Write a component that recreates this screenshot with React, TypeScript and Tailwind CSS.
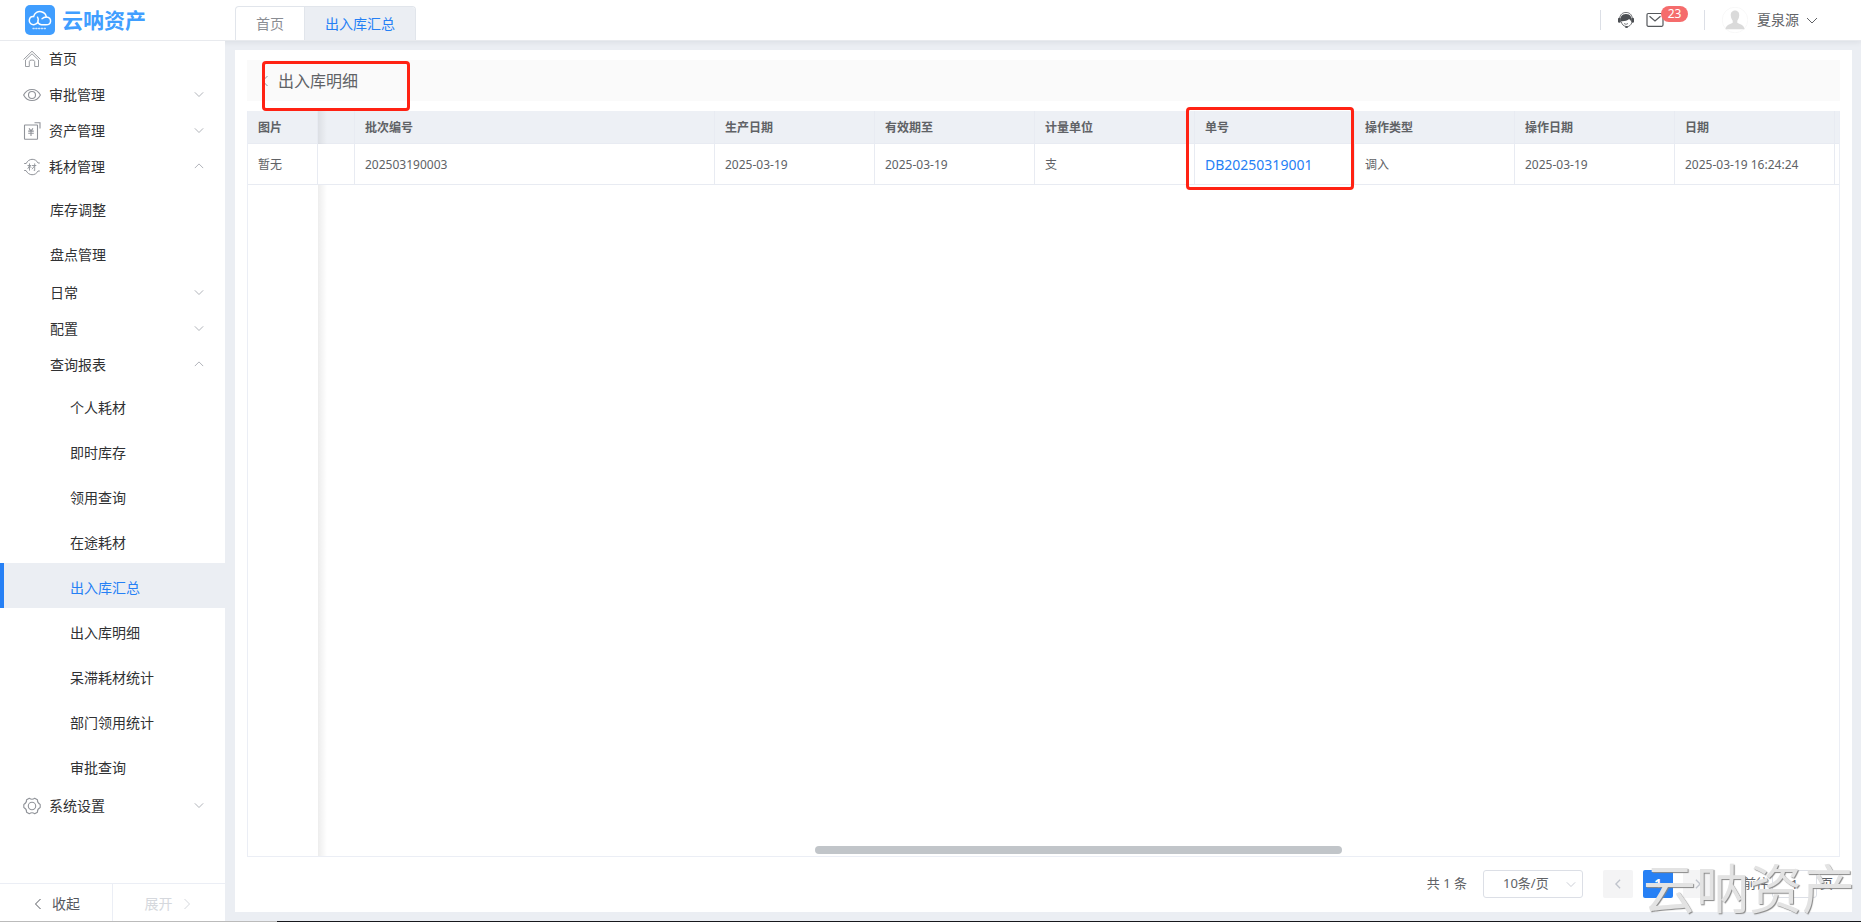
import type { ReactNode } from 'react';

type MenuEntry = {
  label: string;
  level: 1 | 2 | 3;
  icon?: ReactNode;
  open?: boolean;
  group?: boolean;
  active?: boolean;
};

function Chevron({ dir, className }: { dir: 'up' | 'down' | 'left' | 'right'; className: string }) {
  const paths = {
    down: 'M1 4 L6 9 L11 4',
    up: 'M1 8.500 L6 3.500 L11 8.500',
    left: 'M8.500 1 L3.500 6 L8.500 11',
    right: 'M3.500 1 L8.500 6 L3.500 11',
  };
  return (
    <svg viewBox="0 0 12 12" className={className} fill="none" stroke="currentColor" strokeWidth="1" aria-hidden="true">
      <path d={paths[dir]} />
    </svg>
  );
}

const iconClass = 'h-[18px] w-[18px] shrink-0 text-[#909399]';

const HomeIcon = (
  <svg viewBox="0 0 18 18" className={iconClass} fill="none" stroke="currentColor" aria-hidden="true">
    <path d="M.5 9.500 L9 1.200 L17.500 9.500" strokeWidth=".9" />
    <path d="M2.500 10 L9 3.800 L15.500 10 V16.500 H11.700 V11.500 Q11.700 10 9 10 Q6.300 10 6.300 11.500 V16.500 H2.500 Z" strokeWidth=".9" />
  </svg>
);
const EyeIcon = (
  <svg viewBox="0 0 18 18" className={iconClass} fill="none" stroke="currentColor" strokeWidth="1.1" aria-hidden="true">
    <path d="M.6 9 C4.500 1.600 13.500 1.600 17.400 9 C13.500 16.400 4.500 16.400 .6 9 Z" />
    <circle cx="9" cy="9" r="3.500" />
  </svg>
);
const AssetIcon = (
  <svg viewBox="0 0 18 18" className={iconClass} fill="none" stroke="currentColor" strokeWidth="1.1" aria-hidden="true">
    <rect x="1.500" y="3" width="13" height="14.200" rx=".5" />
    <path d="M11.500 .8 H17 V6.500" />
    <path d="M6 6.300 L8 8.800 L10 6.300 M5.200 9.100 H10.800 M5.200 11.200 H10.800 M8 8.800 V14" />
  </svg>
);
const MaterialIcon = (
  <svg viewBox="0 0 18 18" className={iconClass} fill="none" stroke="currentColor" strokeWidth="1" aria-hidden="true">
    <path d="M1.200 5.500 H3.200 C5.500 .2 12.500 -.2 15 5 H16.800 M1.200 12.500 H3 C5.500 17.900 12.500 18.200 15 13 H16.800" />
    <path d="M4.500 7.500 H8.300 M6.500 5.400 V12.600 M6.400 8 L4.700 10.800 M6.700 8 L8.200 9.800 M9 7.500 H13.300 M11.700 5.400 V12.600 L10.700 12.300 M11.500 8 L9 11.200" strokeWidth=".9" />
  </svg>
);
const GearIcon = (
  <svg viewBox="0 0 18 18" className={iconClass} fill="none" stroke="currentColor" strokeWidth="1.1" strokeLinejoin="round" aria-hidden="true">
    <path d="M6.300 1.200 Q9 3.200 11.700 1.200 L14.400 2.800 Q14.200 6 17.200 7.400 V10.600 Q14.200 12 14.400 15.200 L11.700 16.800 Q9 14.800 6.300 16.800 L3.600 15.200 Q3.800 12 .8 10.600 V7.400 Q3.800 6 3.600 2.800 Z" />
    <circle cx="9" cy="9" r="3.700" />
  </svg>
);

const menu: MenuEntry[] = [
  { label: '首页', level: 1, icon: HomeIcon },
  { label: '审批管理', level: 1, icon: EyeIcon, group: true },
  { label: '资产管理', level: 1, icon: AssetIcon, group: true },
  { label: '耗材管理', level: 1, icon: MaterialIcon, group: true, open: true },
  { label: '库存调整', level: 2 },
  { label: '盘点管理', level: 2 },
  { label: '日常', level: 2, group: true },
  { label: '配置', level: 2, group: true },
  { label: '查询报表', level: 2, group: true, open: true },
  { label: '个人耗材', level: 3 },
  { label: '即时库存', level: 3 },
  { label: '领用查询', level: 3 },
  { label: '在途耗材', level: 3 },
  { label: '出入库汇总', level: 3, active: true },
  { label: '出入库明细', level: 3 },
  { label: '呆滞耗材统计', level: 3 },
  { label: '部门领用统计', level: 3 },
  { label: '审批查询', level: 3 },
  { label: '系统设置', level: 1, icon: GearIcon, group: true },
];

function MenuItem({ entry }: { entry: MenuEntry }) {
  if (entry.level === 1 || entry.group) {
    return (
      <button
        type="button"
        aria-expanded={entry.group ? !!entry.open : undefined}
        className={`flex h-9 w-full items-center pr-[21px] text-left text-[#303133] ${entry.level === 1 ? 'gap-2 pl-[23px]' : 'pl-[50px]'}`}
      >
        {entry.icon}
        <span className="grow">{entry.label}</span>
        {entry.group && <Chevron dir={entry.open ? 'up' : 'down'} className="mb-[2px] h-[10px] w-[10px] text-[#a0a4ab]" />}
      </button>
    );
  }
  return (
    <a
      href="#"
      className={`flex h-[45px] items-center border-l-4 pt-1 ${entry.level === 2 ? 'pl-[46px]' : 'pl-[66px]'} ${
        entry.active ? 'border-[#2680f5] bg-[#ebeef3] text-[#2680f5]' : 'border-transparent text-[#303133]'
      }`}
    >
      {entry.label}
    </a>
  );
}

function Header() {
  return (
    <header className="relative z-10 flex h-[41px] shrink-0 border-b border-[#e8eaee] bg-white shadow-[0_1px_6px_rgba(0,21,41,0.08)]">
      <div className="flex w-[235px] shrink-0 items-center gap-[7px] pl-[25px]">
        <svg viewBox="0 0 30 30" className="h-[30px] w-[30px]" fill="none" stroke="#fff" strokeLinecap="round" aria-hidden="true">
          <rect width="30" height="30" rx="5" fill="#409eff" stroke="none" />
          <path
            d="M12.500 12.200 C14 14.500 13.500 18.800 9.500 19.600 C6 20 4 17.800 4.300 15.200 C4.600 12.800 6.500 11.400 8.600 11.600 C9.500 7.800 13 6 16.300 6.800 C19.300 7.500 21 9.600 21.300 12 C24 12.300 25.700 13.800 25.600 16.200 C25.400 18.700 23.600 19.800 21 19.800 H16.500 C13.800 19.500 12.300 17.500 13 15"
            strokeWidth="1.500"
          />
          <path d="M17 13.800 C18.500 12.200 20 12 21.300 12" strokeWidth="1.300" />
          <path d="M8 23.500 H22" strokeWidth="1.300" strokeDasharray="1.200 1.600" opacity=".75" />
        </svg>
        <span className="text-[21px] leading-none font-bold text-[#409eff]">云呐资产</span>
      </div>
      <nav className="mt-[6px] flex grow">
        <div className="flex overflow-hidden rounded-t border border-b-0 border-[#e1e5eb]">
          <a href="#" className="flex w-[68px] items-center justify-center text-[#8a8d93]">首页</a>
          <a href="#" className="flex w-[111px] items-center justify-center border-l border-[#e1e5eb] bg-[#ebeef3] text-[#2680f5]">出入库汇总</a>
        </div>
      </nav>
      <div className="flex items-center pr-[43px] pb-1 text-[#606266]">
        <span className="mt-1 h-5 w-px bg-[#dcdfe6]" />
        <button type="button" aria-label="客服" className="mt-1 ml-[17px]">
          <svg viewBox="0 0 16 16" className="h-4 w-4" aria-hidden="true">
            <path d="M1.800 6.500 C1.800 -1.600 14.200 -1.600 14.200 6.500" fill="none" stroke="#4c4f53" strokeWidth=".8" />
            <path d="M2.600 9.200 C2.200 5 3.300 1.900 8 1.900 C12.700 1.900 13.800 5 13.400 9.200 C12.700 8.900 11.800 8.200 11.200 7.100 C9 9.100 5.500 9.500 2.600 9.200 Z" fill="#4c4f53" />
            <rect x="0" y="5.800" width="2.800" height="5" rx="1.300" fill="#4c4f53" />
            <rect x="13.200" y="5.800" width="2.800" height="5" rx="1.300" fill="#4c4f53" />
            <path d="M3.200 9.500 C4 12.800 5.800 14.200 7.800 14.300 M14 10.300 C13.200 13 11 14.800 8.300 15" fill="none" stroke="#4c4f53" strokeWidth=".8" />
            <path d="M6 11.500 Q8 13.200 10 11.500" fill="none" stroke="#4c4f53" strokeWidth=".7" />
            <ellipse cx="8.500" cy="14.900" rx="1.500" ry="1" fill="#4c4f53" />
          </svg>
        </button>
        <button type="button" aria-label="消息 23" className="relative mt-1 ml-3">
          <svg viewBox="0 0 18 16" className="h-4 w-[18px]" fill="none" stroke="#55585c" strokeWidth="1.200" aria-hidden="true">
            <rect x="1" y="1.500" width="16" height="12.800" rx="1.200" />
            <path d="M3.500 4.200 L9 9 L14.500 4.200" />
          </svg>
          <span className="absolute -top-[6px] left-[15px] flex h-4 w-[27px] items-center justify-center rounded-full bg-[#f56c6c] text-xs leading-none text-white">23</span>
        </button>
        <span className="mt-1 ml-10 h-5 w-px bg-[#dcdfe6]" />
        <button type="button" className="mt-1 ml-[17px] flex items-center">
          <svg viewBox="0 0 26 26" className="h-[26px] w-[26px]" aria-hidden="true">
            <circle cx="13" cy="13" r="12.800" fill="#fff" stroke="#f3f3f3" strokeWidth=".6" />
            <path d="M13 3.500 C16 3.500 17.500 5.800 17.200 8.800 C17 11.500 16 12.600 15.300 13.800 V15.800 C17.500 17.300 22 17.600 22.600 22.300 H3.400 C4 17.600 8.500 17.300 10.700 15.800 V13.800 C10 12.600 9 11.500 8.800 8.800 C8.500 5.800 10 3.500 13 3.500 Z" fill="#dadada" />
          </svg>
          <span className="ml-[9px]">夏泉源</span>
          <Chevron dir="down" className="ml-[7px] h-3 w-3" />
        </button>
      </div>
    </header>
  );
}

const columns = ['图片', '', '批次编号', '生产日期', '有效期至', '计量单位', '单号', '操作类型', '操作日期', '日期', ''];
const row = ['暂无', '', '202503190003', '2025-03-19', '2025-03-19', '支', 'DB20250319001', '调入', '2025-03-19', '2025-03-19 16:24:24', ''];

function DataTable() {
  return (
    <div className="relative mt-[10px] grow border border-t-0 border-[#ebeef5]">
      <table className="w-full table-fixed border-separate border-spacing-0 text-left text-xs text-[#606266]">
        <colgroup>
          <col className="w-[70px]" />
          <col className="w-[37px]" />
          <col className="w-[360px]" />
          <col className="w-[160px]" />
          <col className="w-[160px]" />
          <col className="w-[160px]" />
          <col className="w-[160px]" />
          <col className="w-[160px]" />
          <col className="w-[160px]" />
          <col className="w-[160px]" />
          <col />
        </colgroup>
        <thead>
          <tr className="h-[33px] bg-[#edf0f5]">
            {columns.map((name, i) => (
              <th
                key={i}
                scope="col"
                className={`truncate border-b border-[#e8ebf2] px-0 pt-[2px] pb-0 font-bold ${i < 10 ? 'border-r' : ''} ${name ? 'pl-[10px]' : ''}`}
              >
                {name}
              </th>
            ))}
          </tr>
        </thead>
        <tbody>
          <tr className="h-[41px]">
            {row.map((value, i) => (
              <td
                key={i}
                className={`relative z-10 truncate border-b border-[#e8ebf2] bg-white px-0 pt-[2px] pb-0 ${i < 10 ? 'border-r' : ''} ${value ? 'pl-[10px]' : ''}`}
              >
                {i === 6 ? (
                  <a href="#" className="text-sm text-[#2680f5]">{value}</a>
                ) : (
                  value
                )}
              </td>
            ))}
          </tr>
        </tbody>
      </table>
      <div className="pointer-events-none absolute inset-y-0 left-[70px] w-[9px] bg-linear-to-r from-black/7 to-transparent" />
      <div className="pointer-events-none absolute -top-[4px] left-[938px] z-20 h-[83px] w-[168px] rounded border-3 border-[#ff2213]" />
      <div className="absolute bottom-[2px] left-[35.65%] h-2 w-[33.1%] rounded bg-[#c1c5c9]" />
    </div>
  );
}

function Pagination() {
  return (
    <div className="relative flex h-[55px] shrink-0 items-center justify-end pr-[7px] pb-[2px] text-[13px] text-[#606266]">
      <span>共 1 条</span>
      <span className="relative ml-4">
        <select aria-label="每页条数" className="block h-7 w-[100px] appearance-none rounded-[3px] border border-[#dcdfe6] bg-white pl-[19px] text-[13px]">
          <option>10条/页</option>
        </select>
        <Chevron dir="down" className="pointer-events-none absolute top-[9px] right-[7px] h-[10px] w-[10px] text-[#c0c4cc]" />
      </span>
      <button type="button" aria-label="上一页" className="ml-5 flex h-7 w-[30px] items-center justify-center rounded-xs bg-[#f4f4f5]">
        <Chevron dir="left" className="h-[10px] w-[10px] stroke-[1.6] text-[#c0c4cc]" />
      </button>
      <button type="button" aria-current="page" className="ml-[10px] h-7 w-[30px] rounded-xs bg-[#2680f5] font-bold text-white">1</button>
      <button type="button" aria-label="下一页" className="ml-[10px] flex h-7 w-[30px] items-center justify-center rounded-xs bg-[#f4f4f5]">
        <Chevron dir="right" className="h-[10px] w-[10px] stroke-[1.6] text-[#c0c4cc]" />
      </button>
      <label className="ml-[30px] flex items-center">
        前往
        <input type="text" defaultValue="1" className="mx-[3px] h-7 w-[45px] rounded-[3px] border border-[#dcdfe6] bg-white text-center" />
        页
      </label>
      <div className="pointer-events-none absolute -right-[15px] -bottom-[3px] text-[53px] leading-[53px] whitespace-nowrap text-[#e3e3e3] [text-shadow:1px_1px_1px_#888]">
        云呐资产
      </div>
    </div>
  );
}

export default function App() {
  return (
    <div className="flex min-h-screen flex-col bg-[#ebeef3] font-['Noto_Sans','Noto_Sans_CJK_SC',sans-serif] text-sm">
      <Header />
      <div className="flex grow">
        <aside className="relative z-20 flex w-[225px] shrink-0 flex-col bg-white">
          <nav className="grow">
            {menu.map((entry) => (
              <MenuItem key={entry.label} entry={entry} />
            ))}
          </nav>
          <div className="flex h-[38px] border-t border-[#ebeef5]">
            <button type="button" className="flex w-1/2 items-center gap-2 border-r border-[#ebeef5] pt-[2px] pl-[32px] text-[#55585e]">
              <Chevron dir="left" className="h-3 w-3" />
              收起
            </button>
            <button type="button" disabled className="flex w-1/2 items-center gap-2 pt-[2px] pl-8 text-[#d5d8dd]">
              展开
              <Chevron dir="right" className="h-3 w-3" />
            </button>
          </div>
        </aside>
        <main className="mt-[9px] mr-[9px] mb-[9px] ml-[10px] flex min-w-0 grow flex-col bg-white px-3 pt-[10px]">
          <div className="relative flex h-[41px] shrink-0 items-center bg-[#fafafa] pl-[12px]">
            <button type="button" aria-label="返回" className="text-[#909399]">
              <Chevron dir="left" className="h-3 w-3" />
            </button>
            <h1 className="ml-[7px] pt-px text-base text-[#606266]">出入库明细</h1>
            <div className="pointer-events-none absolute top-px left-[15px] h-[50px] w-[148px] rounded border-3 border-[#ff2213]" />
          </div>
          <DataTable />
          <Pagination />
        </main>
      </div>
      <div className="flex h-px shrink-0">
        <div className="w-[277px] bg-[#bbbbbb]" />
        <div className="grow bg-[#17181c]" />
      </div>
    </div>
  );
}
